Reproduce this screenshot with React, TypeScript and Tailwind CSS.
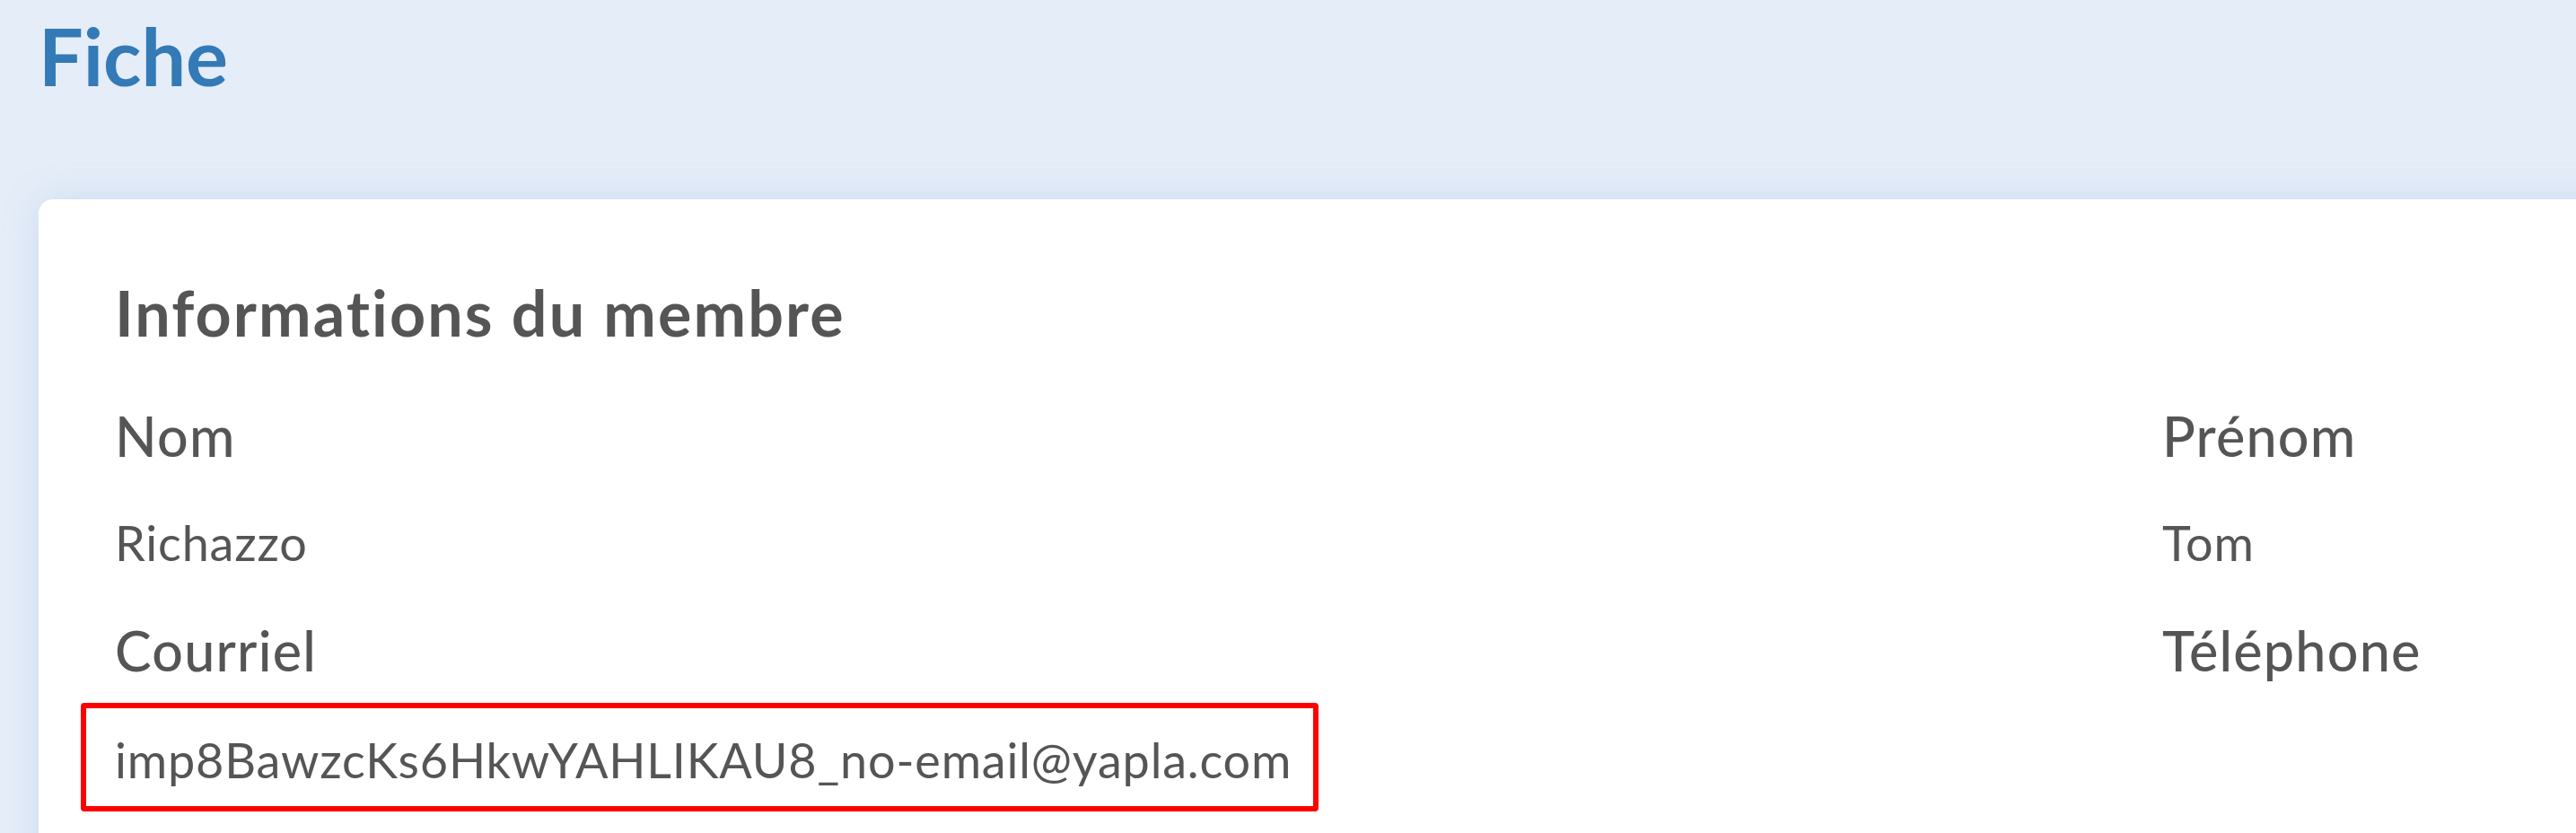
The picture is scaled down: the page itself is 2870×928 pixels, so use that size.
import React from 'react';

type Field = { label: string; value?: string; highlight?: boolean };

const rows: Field[][] = [
  [
    { label: 'Nom', value: 'Richazzo' },
    { label: 'Prénom', value: 'Tom' },
  ],
  [
    { label: 'Courriel', value: 'imp8BawzcKs6HkwYAHLIKAU8_no-email@yapla.com', highlight: true },
    { label: 'Téléphone' },
  ],
];

function FieldBlock({ field }: { field: Field }) {
  return (
    <div className="flex flex-col">
      <p className="text-[61px] leading-none font-medium tracking-[0.02em] text-[#555555]">{field.label}</p>
      {field.value &&
        (field.highlight ? (
          <div className="mt-[28px] -ml-[38px] w-fit border-[6px] border-[#ff0000] rounded-[4px] pl-[32px] pr-[24px] pt-[31px] pb-[24px]">
            <p className="text-[54px] leading-none tracking-[0.015em] text-[#555555]">{field.value}</p>
          </div>
        ) : (
          <p className="mt-[62px] text-[54px] leading-none tracking-[0.015em] text-[#555555]">{field.value}</p>
        ))}
    </div>
  );
}

export default function App() {
  return (
    <div
      className="w-[2870px] h-[928px] overflow-hidden bg-[#e5edf8] px-[43px] pt-[18px] [font-variant-ligatures:none]"
      style={{ fontFamily: 'Lato, "Open Sans", sans-serif' }}
    >
      {/* Page title */}
      <h1 className="text-[88px] leading-none font-bold text-[#337ab7]">Fiche</h1>

      {/* Member card */}
      <section className="mt-[116px] w-[4000px] bg-white rounded-2xl shadow-[0_0_40px_rgba(120,160,225,0.22)] pl-[85px] pt-[91px] pb-[80px]">
        <h2 className="text-[70px] leading-none font-bold tracking-[0.03em] text-[#555555]">Informations du membre</h2>
        <div className="mt-[72px] flex flex-col gap-[62px]">
          {rows.map((row, i) => (
            <div key={i} className="grid grid-cols-[2281px_1fr]">
              {row.map((f) => (
                <FieldBlock key={f.label} field={f} />
              ))}
            </div>
          ))}
        </div>
      </section>
    </div>
  );
}
